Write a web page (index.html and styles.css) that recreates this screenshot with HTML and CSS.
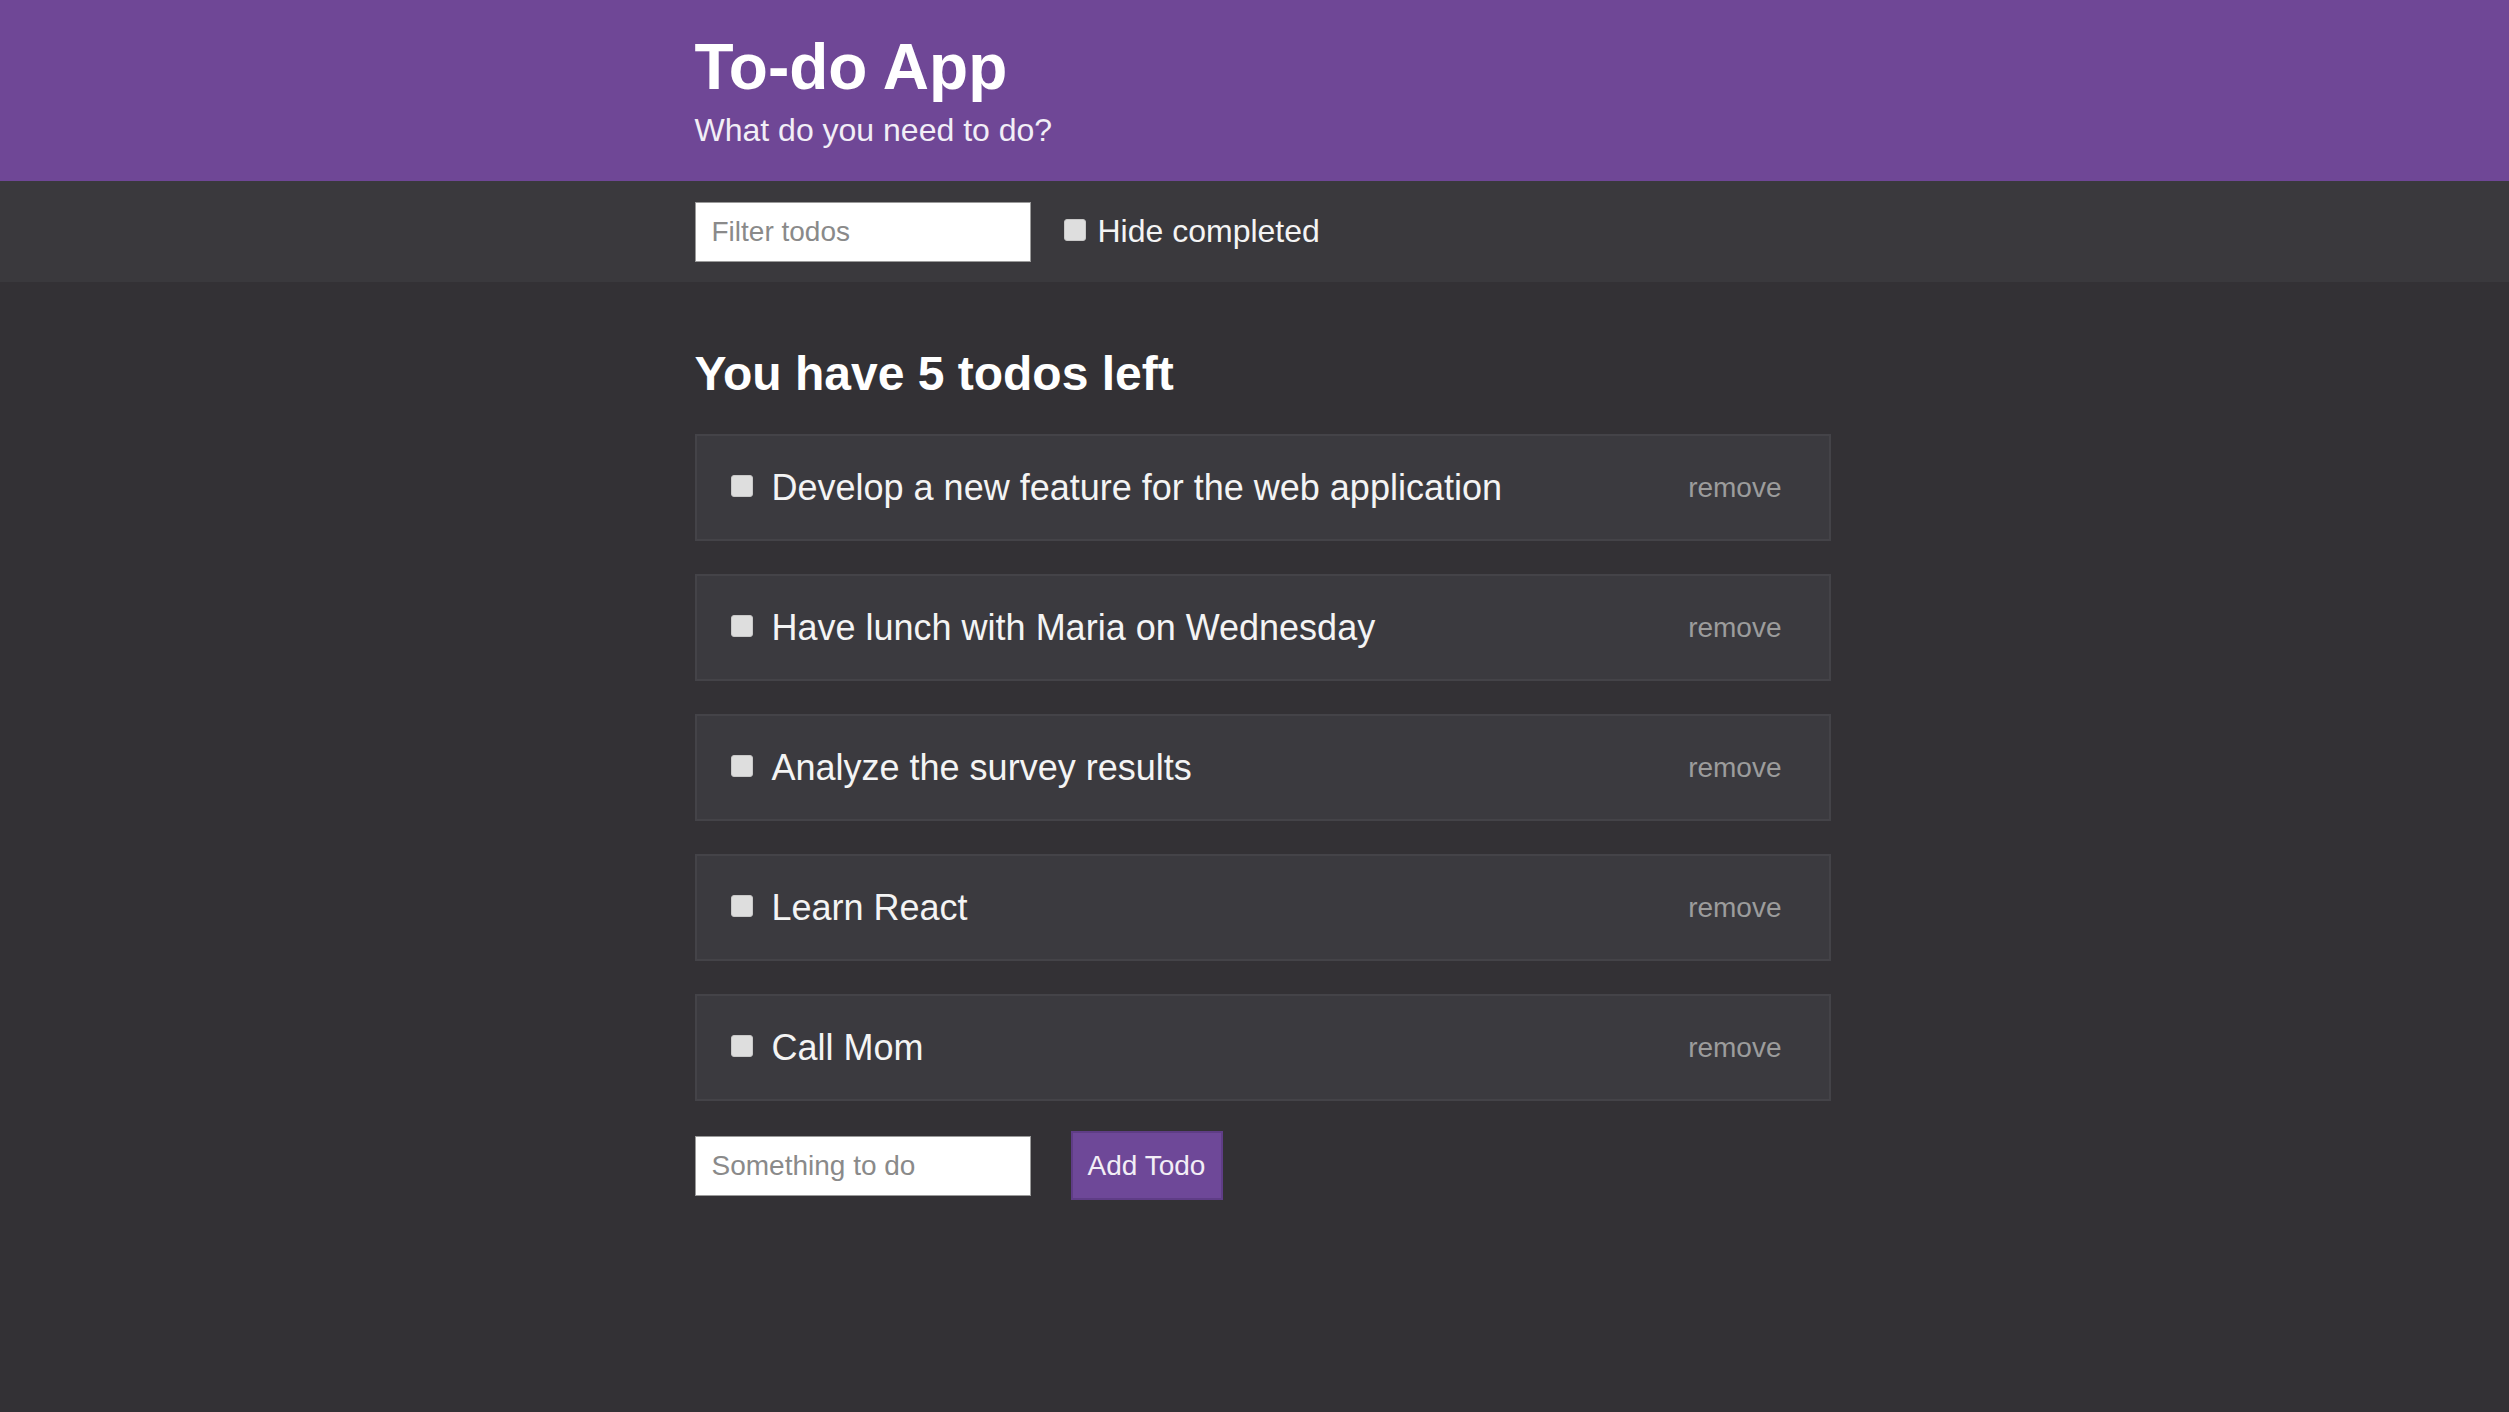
FILE: index.html
```html
<!DOCTYPE html>
<html lang="en">
<head>
<meta charset="utf-8">
<title>To-do App</title>
<link rel="stylesheet" href="styles.css">
</head>
<body>
<header class="header">
  <div class="wrap">
    <h1 class="title">To-do App</h1>
    <p class="subtitle">What do you need to do?</p>
  </div>
</header>
<section class="filterbar">
  <div class="wrap filter-row">
    <input class="text-input" type="text" placeholder="Filter todos">
    <label class="hide-label"><input class="box" type="checkbox"><span>Hide completed</span></label>
  </div>
</section>
<main class="wrap main">
  <h2 class="count">You have 5 todos left</h2>
  <ul class="todos">
    <li class="todo"><input class="box" type="checkbox"><span class="todo-text">Develop a new feature for the web application</span><button class="remove">remove</button></li>
    <li class="todo"><input class="box" type="checkbox"><span class="todo-text">Have lunch with Maria on Wednesday</span><button class="remove">remove</button></li>
    <li class="todo"><input class="box" type="checkbox"><span class="todo-text">Analyze the survey results</span><button class="remove">remove</button></li>
    <li class="todo"><input class="box" type="checkbox"><span class="todo-text">Learn React</span><button class="remove">remove</button></li>
    <li class="todo"><input class="box" type="checkbox"><span class="todo-text">Call Mom</span><button class="remove">remove</button></li>
  </ul>
  <form class="add-row">
    <input class="text-input" type="text" placeholder="Something to do">
    <button class="add-btn" type="button">Add Todo</button>
  </form>
</main>
</body>
</html>
```
FILE: styles.css
```css
* { box-sizing: border-box; }
html, body { margin: 0; padding: 0; }
body {
  background: #333135;
  font-family: "Liberation Sans", Arial, sans-serif;
  color: #fff;
  min-height: 1412px;
}
.wrap {
  width: 1152px;
  margin: 0 auto;
  padding-left: 16px;
}
.header {
  background: #6f4796;
  height: 181px;
  padding-top: 30px;
}
.title {
  margin: 0;
  font-size: 64px;
  font-weight: 700;
  line-height: 74px;
  color: #fff;
}
.subtitle {
  margin: 8px 0 0;
  font-size: 32px;
  line-height: 37px;
  color: #f2eef6;
}
.filterbar {
  background: #3a393d;
  height: 101px;
}
.filter-row {
  display: flex;
  align-items: center;
  height: 101px;
}
.text-input {
  width: 336px;
  height: 60px;
  border: 1px solid #9a9a9a;
  background: #fff;
  font-family: "Liberation Sans", Arial, sans-serif;
  font-size: 28px;
  padding: 0 16px;
  color: #333;
  outline: none;
}
.text-input::placeholder { color: #8a8a8a; }
.hide-label {
  display: flex;
  align-items: center;
  margin-left: 33px;
  font-size: 32px;
  color: #f4f4f4;
}
.hide-label .box { margin-right: 12px; margin-top: -4px; }
.box {
  appearance: none;
  -webkit-appearance: none;
  width: 22px;
  height: 22px;
  margin: 0;
  border-radius: 3px;
  background: #dedede;
  border: 1px solid #c8c8c8;
  flex: none;
}
.main { padding-top: 64px; }
.count {
  margin: 0;
  font-size: 48px;
  line-height: 55px;
  font-weight: 700;
  color: #fff;
}
.todos {
  list-style: none;
  margin: 33px 0 0;
  padding: 0;
  width: 1136px;
  display: flex;
  flex-direction: column;
  gap: 33px;
}
.todo {
  display: flex;
  align-items: center;
  height: 107px;
  background: #3b3a3f;
  border: 2px solid #444348;
  padding: 0 47px 0 34px;
}
.todo .box { margin-top: -4px; }
.todo-text {
  flex: 1;
  margin-left: 19px;
  font-size: 36px;
  color: #f4f4f4;
}
.remove {
  background: none;
  border: none;
  padding: 0;
  font-family: "Liberation Sans", Arial, sans-serif;
  font-size: 28px;
  color: #9c9c9c;
}
.add-row {
  display: flex;
  align-items: center;
  margin-top: 30px;
}
.add-btn {
  margin-left: 40px;
  width: 152px;
  height: 69px;
  background: #6e4898;
  border: 2px solid #5f3d86;
  color: #f2eef6;
  font-family: "Liberation Sans", Arial, sans-serif;
  font-size: 28px;
  padding: 0;
}
```
